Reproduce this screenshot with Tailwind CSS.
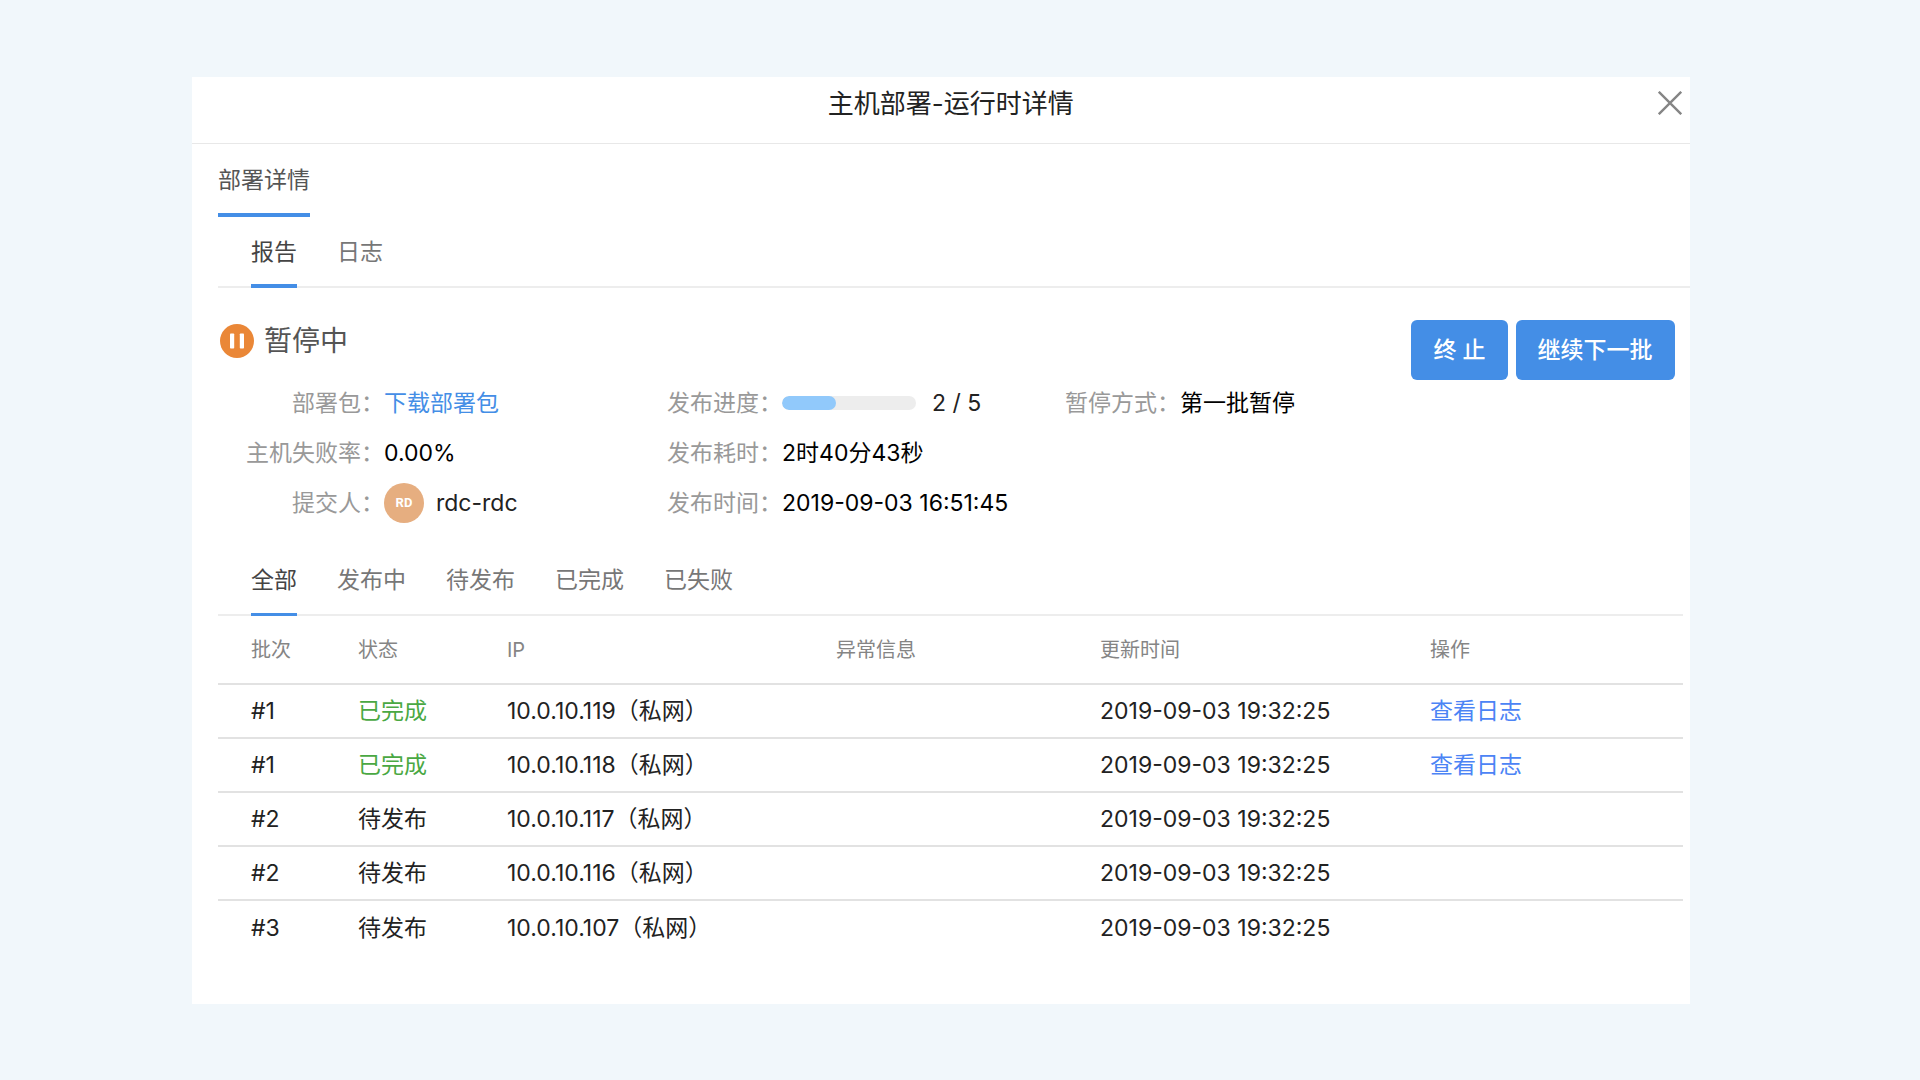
<!DOCTYPE html>
<html lang="zh-CN">
<head>
<meta charset="utf-8">
<title>主机部署-运行时详情</title>
<script src="https://cdn.jsdelivr.net/npm/@tailwindcss/browser@4"></script>
</head>
<body class="min-h-screen bg-[#f1f7fb] pt-[77px] pr-[12%] pb-19 pl-[10%] font-['Inter','Noto_Sans_CJK_SC',sans-serif] text-[23px] leading-8 text-[#222]">
<main class="bg-white pb-[50px]">
  <header class="flex items-start border-b border-[#e8e8e8] pt-[10px] pr-2 pb-[23px] pl-[52px]">
    <h1 class="flex-1 pt-px text-center text-[26px] leading-8 text-[#222]">主机部署-运行时详情</h1>
    <button type="button" aria-label="关闭" class="flex h-8 w-6 items-center justify-center">
      <svg class="size-6" viewBox="0 0 24 24" fill="none" stroke="#858585" stroke-width="2.4"><path d="M.8.8 23.2 23.2M23.2.8.8 23.2"/></svg>
    </button>
  </header>

  <div class="pl-[26px]">
    <nav class="flex pt-5" role="tablist" aria-label="部署">
      <button type="button" role="tab" aria-selected="true" class="border-b-4 border-[#448ee6] pb-[17px] text-[#555]">部署详情</button>
    </nav>
    <nav class="flex gap-10 border-b-2 border-[#ededed] pt-[19px] pl-[33px]" role="tablist" aria-label="详情">
      <button type="button" role="tab" aria-selected="true" class="-mb-[2px] border-b-4 border-[#448ee6] pb-4 text-[#444]">报告</button>
      <button type="button" role="tab" aria-selected="false" class="-mb-[2px] border-b-4 border-transparent pb-4 text-[#777]">日志</button>
    </nav>

    <section class="flex items-start justify-between pt-8 pr-[15px]">
      <div class="flex items-center gap-[10px] pt-1 pl-[2px]">
        <svg class="size-[34px]" viewBox="0 0 34 34"><circle cx="17" cy="17" r="17" fill="#ea8737"/><rect x="10" y="9.5" width="4.2" height="15" rx=".8" fill="#fff"/><rect x="19.8" y="9.5" width="4.2" height="15" rx=".8" fill="#fff"/></svg>
        <h2 class="text-[28px] leading-8 text-[#555]">暂停中</h2>
      </div>
      <div class="-mb-10 flex gap-2 font-medium text-white">
        <button type="button" class="h-[60px] rounded-md bg-[#448ee6] px-[22px]">终 止</button>
        <button type="button" class="h-[60px] rounded-md bg-[#448ee6] px-[22px]">继续下一批</button>
      </div>
    </section>

    <dl class="mt-5 grid w-fit auto-rows-[50px] grid-cols-[166px_283px_115px_283px_115px_auto] items-center text-black [&>dt]:text-right [&>dt]:text-[#999]">
      <dt>部署包：</dt><dd><a href="#" class="text-[#448ee6]">下载部署包</a></dd>
      <dt>发布进度：</dt>
      <dd class="flex items-center gap-4">
        <div role="progressbar" aria-valuemin="0" aria-valuemax="5" aria-valuenow="2" aria-label="发布进度" class="h-[14px] w-[134px] overflow-hidden rounded-full bg-[#ededed]"><div class="h-full rounded-full bg-[#91c9fb]" style="width:40%"></div></div>
        <span class="text-[#222]">2 / 5</span>
      </dd>
      <dt>暂停方式：</dt><dd>第一批暂停</dd>
      <dt>主机失败率：</dt><dd>0.00%</dd>
      <dt>发布耗时：</dt><dd class="col-span-3">2时40分43秒</dd>
      <dt>提交人：</dt>
      <dd class="flex items-center gap-3 text-[#222]"><span class="flex size-10 items-center justify-center rounded-full bg-[#e6ae80] font-['Roboto'] text-[13px] font-bold text-white">RD</span>rdc-rdc</dd>
      <dt>发布时间：</dt><dd class="col-span-3">2019-09-03 16:51:45</dd>
    </dl>

    <div class="pr-[7px]">
      <nav class="mt-9 flex gap-10 border-b-2 border-[#ededed] pl-[33px] text-[#777]" role="tablist" aria-label="状态筛选">
        <button type="button" role="tab" aria-selected="true" class="-mb-[2px] border-b-3 border-[#448ee6] pb-[17px] text-[#444]">全部</button>
        <button type="button" role="tab" aria-selected="false" class="pb-[18px]">发布中</button>
        <button type="button" role="tab" aria-selected="false" class="pb-[18px]">待发布</button>
        <button type="button" role="tab" aria-selected="false" class="pb-[18px]">已完成</button>
        <button type="button" role="tab" aria-selected="false" class="pb-[18px]">已失败</button>
      </nav>
      <table class="w-full table-fixed text-left [&_td]:p-0 [&_td:first-child]:pl-[33px] [&_th]:p-0 [&_th:first-child]:pl-[33px]">
        <colgroup><col class="w-[140px]"><col class="w-[149px]"><col class="w-[329px]"><col class="w-[264px]"><col class="w-[330px]"><col></colgroup>
        <thead>
          <tr class="h-[68px] border-b-2 border-[#e2e2e2] text-[20px] text-[#858585] [&>th]:font-normal"><th>批次</th><th>状态</th><th>IP</th><th>异常信息</th><th>更新时间</th><th>操作</th></tr>
        </thead>
        <tbody class="[&>tr]:h-[54px] [&>tr]:border-b-2 [&>tr]:border-[#e2e2e2] [&>tr:last-child]:border-0">
          <tr><td>#1</td><td class="text-[#4aa843]">已完成</td><td>10.0.10.119（私网）</td><td></td><td>2019-09-03 19:32:25</td><td><a href="#" class="text-[#4c84f5]">查看日志</a></td></tr>
          <tr><td>#1</td><td class="text-[#4aa843]">已完成</td><td>10.0.10.118（私网）</td><td></td><td>2019-09-03 19:32:25</td><td><a href="#" class="text-[#4c84f5]">查看日志</a></td></tr>
          <tr><td>#2</td><td>待发布</td><td>10.0.10.117（私网）</td><td></td><td>2019-09-03 19:32:25</td><td></td></tr>
          <tr><td>#2</td><td>待发布</td><td>10.0.10.116（私网）</td><td></td><td>2019-09-03 19:32:25</td><td></td></tr>
          <tr><td>#3</td><td>待发布</td><td>10.0.10.107（私网）</td><td></td><td>2019-09-03 19:32:25</td><td></td></tr>
        </tbody>
      </table>
    </div>
  </div>
</main>
</body>
</html>
